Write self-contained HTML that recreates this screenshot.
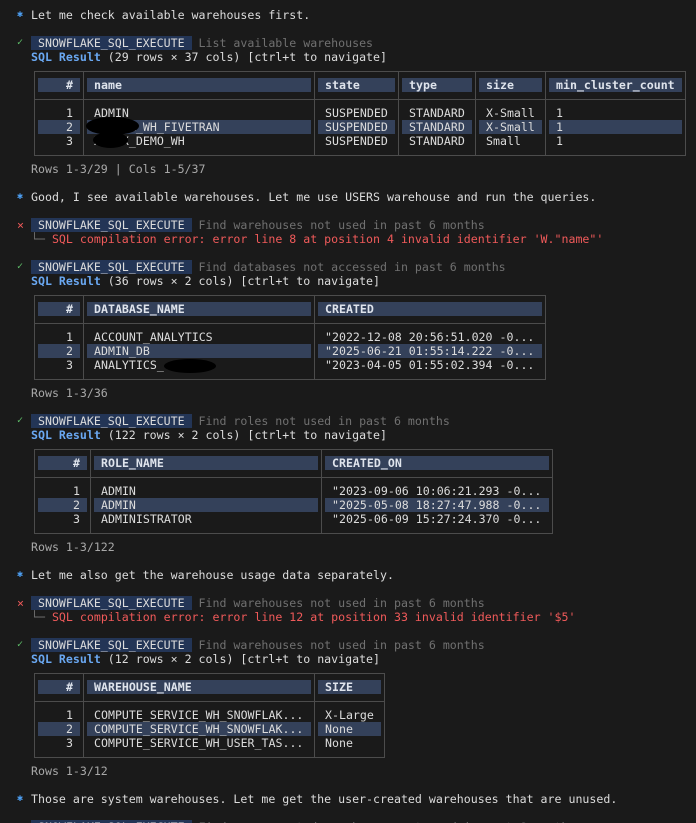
<!DOCTYPE html>
<html><head><meta charset="utf-8"><style>
html,body{margin:0;padding:0;background:#1a1a1a;width:696px;height:823px;overflow:hidden}
body{position:relative;font-family:"DejaVu Sans Mono","Liberation Mono",monospace;font-size:11.6px;color:#dcdcdc}
.t{position:absolute;height:14px;line-height:14px;white-space:pre}
.bg{position:absolute;height:14px;background:#34415a}
.bd{position:absolute;height:14px;background:#233556}
.v{position:absolute;width:1px;background:#4c4c4c}
.hz{position:absolute;height:1px;background:#4c4c4c}
.b{font-weight:bold;color:#dfe4ec}
.dim{color:#707070}
.blue{color:#4d9ff2;font-size:10px}
.grn{color:#5fc06a;font-size:10px}
.red{color:#f05a5a}
.sql{color:#6aa8f2;font-weight:bold}
.gray{color:#a8a8a8}
.blk{position:absolute;background:#000;border-radius:50%}
</style></head><body>

<div class="t blue" style="left:17px;top:8px">✱</div>
<div class="t" style="left:31px;top:8px">Let me check available warehouses first.</div>

<div class="t grn" style="left:17px;top:36px">✓</div>
<div class="bd" style="left:31px;top:36px;width:161px"></div>
<div class="t" style="left:31px;top:36px"> SNOWFLAKE_SQL_EXECUTE  <span class="dim">List available warehouses</span></div>
<div class="t" style="left:31px;top:50px"><span class="sql">SQL Result</span> (29 rows × 37 cols) [ctrl+t to navigate]</div>

<div class="hz" style="left:34px;top:71px;width:652px"></div>
<div class="hz" style="left:34px;top:99px;width:652px"></div>
<div class="hz" style="left:34px;top:155px;width:652px"></div>
<div class="v" style="left:34px;top:71px;height:85px"></div>
<div class="v" style="left:83px;top:71px;height:85px"></div>
<div class="v" style="left:314px;top:71px;height:85px"></div>
<div class="v" style="left:398px;top:71px;height:85px"></div>
<div class="v" style="left:475px;top:71px;height:85px"></div>
<div class="v" style="left:545px;top:71px;height:85px"></div>
<div class="v" style="left:685px;top:71px;height:85px"></div>

<div class="bg" style="left:38px;top:78px;width:42px"></div>
<div class="bg" style="left:87px;top:78px;width:224px"></div>
<div class="bg" style="left:318px;top:78px;width:77px"></div>
<div class="bg" style="left:402px;top:78px;width:70px"></div>
<div class="bg" style="left:479px;top:78px;width:63px"></div>
<div class="bg" style="left:549px;top:78px;width:133px"></div>
<div class="bg" style="left:38px;top:120px;width:42px"></div>
<div class="bg" style="left:87px;top:120px;width:224px"></div>
<div class="bg" style="left:318px;top:120px;width:77px"></div>
<div class="bg" style="left:402px;top:120px;width:70px"></div>
<div class="bg" style="left:479px;top:120px;width:63px"></div>
<div class="bg" style="left:549px;top:120px;width:133px"></div>

<div class="t b" style="left:66px;top:78px">#</div>
<div class="t b" style="left:94px;top:78px">name</div>
<div class="t b" style="left:325px;top:78px">state</div>
<div class="t b" style="left:409px;top:78px">type</div>
<div class="t b" style="left:486px;top:78px">size</div>
<div class="t b" style="left:556px;top:78px">min_cluster_count</div>

<div class="t" style="left:66px;top:106px">1</div>
<div class="t" style="left:94px;top:106px">ADMIN</div>
<div class="t" style="left:325px;top:106px">SUSPENDED</div>
<div class="t" style="left:409px;top:106px">STANDARD</div>
<div class="t" style="left:486px;top:106px">X-Small</div>
<div class="t" style="left:556px;top:106px">1</div>
<div class="t" style="left:66px;top:120px">2</div>
<div class="t" style="left:94px;top:120px">XXXXXX_WH_FIVETRAN</div>
<div class="t" style="left:325px;top:120px">SUSPENDED</div>
<div class="t" style="left:409px;top:120px">STANDARD</div>
<div class="t" style="left:486px;top:120px">X-Small</div>
<div class="t" style="left:556px;top:120px">1</div>
<div class="t" style="left:66px;top:134px">3</div>
<div class="t" style="left:94px;top:134px">XXXXX_DEMO_WH</div>
<div class="t" style="left:325px;top:134px">SUSPENDED</div>
<div class="t" style="left:409px;top:134px">STANDARD</div>
<div class="t" style="left:486px;top:134px">Small</div>
<div class="t" style="left:556px;top:134px">1</div>
<div class="blk" style="left:86px;top:117px;width:53px;height:18px"></div>
<div class="blk" style="left:93px;top:132px;width:35px;height:16px"></div>

<div class="t gray" style="left:31px;top:162px">Rows 1-3/29 | Cols 1-5/37</div>

<div class="t blue" style="left:17px;top:190px">✱</div>
<div class="t" style="left:31px;top:190px">Good, I see available warehouses. Let me use USERS warehouse and run the queries.</div>

<div class="t red" style="left:17px;top:218px">×</div>
<div class="bd" style="left:31px;top:218px;width:161px"></div>
<div class="t" style="left:31px;top:218px"> SNOWFLAKE_SQL_EXECUTE  <span class="dim">Find warehouses not used in past 6 months</span></div>
<div class="t" style="left:31px;top:232px"><span class="dim">└─</span> <span class="red">SQL compilation error: error line 8 at position 4 invalid identifier 'W."name"'</span></div>

<div class="t grn" style="left:17px;top:260px">✓</div>
<div class="bd" style="left:31px;top:260px;width:161px"></div>
<div class="t" style="left:31px;top:260px"> SNOWFLAKE_SQL_EXECUTE  <span class="dim">Find databases not accessed in past 6 months</span></div>
<div class="t" style="left:31px;top:274px"><span class="sql">SQL Result</span> (36 rows × 2 cols) [ctrl+t to navigate]</div>

<div class="hz" style="left:34px;top:295px;width:512px"></div>
<div class="hz" style="left:34px;top:323px;width:512px"></div>
<div class="hz" style="left:34px;top:379px;width:512px"></div>
<div class="v" style="left:34px;top:295px;height:85px"></div>
<div class="v" style="left:83px;top:295px;height:85px"></div>
<div class="v" style="left:314px;top:295px;height:85px"></div>
<div class="v" style="left:545px;top:295px;height:85px"></div>
<div class="bg" style="left:38px;top:302px;width:42px"></div>
<div class="bg" style="left:87px;top:302px;width:224px"></div>
<div class="bg" style="left:318px;top:302px;width:224px"></div>
<div class="bg" style="left:38px;top:344px;width:42px"></div>
<div class="bg" style="left:87px;top:344px;width:224px"></div>
<div class="bg" style="left:318px;top:344px;width:224px"></div>
<div class="t b" style="left:66px;top:302px">#</div>
<div class="t b" style="left:94px;top:302px">DATABASE_NAME</div>
<div class="t b" style="left:325px;top:302px">CREATED</div>
<div class="t" style="left:66px;top:330px">1</div>
<div class="t" style="left:94px;top:330px">ACCOUNT_ANALYTICS</div>
<div class="t" style="left:325px;top:330px">"2022-12-08 20:56:51.020 -0...</div>
<div class="t" style="left:66px;top:344px">2</div>
<div class="t" style="left:94px;top:344px">ADMIN_DB</div>
<div class="t" style="left:325px;top:344px">"2025-06-21 01:55:14.222 -0...</div>
<div class="t" style="left:66px;top:358px">3</div>
<div class="t" style="left:94px;top:358px">ANALYTICS_</div>
<div class="t" style="left:325px;top:358px">"2023-04-05 01:55:02.394 -0...</div>
<div class="blk" style="left:164px;top:359px;width:52px;height:14px"></div>
<div class="t gray" style="left:31px;top:386px">Rows 1-3/36</div>

<div class="t grn" style="left:17px;top:414px">✓</div>
<div class="bd" style="left:31px;top:414px;width:161px"></div>
<div class="t" style="left:31px;top:414px"> SNOWFLAKE_SQL_EXECUTE  <span class="dim">Find roles not used in past 6 months</span></div>
<div class="t" style="left:31px;top:428px"><span class="sql">SQL Result</span> (122 rows × 2 cols) [ctrl+t to navigate]</div>

<div class="hz" style="left:34px;top:449px;width:519px"></div>
<div class="hz" style="left:34px;top:477px;width:519px"></div>
<div class="hz" style="left:34px;top:533px;width:519px"></div>
<div class="v" style="left:34px;top:449px;height:85px"></div>
<div class="v" style="left:90px;top:449px;height:85px"></div>
<div class="v" style="left:321px;top:449px;height:85px"></div>
<div class="v" style="left:552px;top:449px;height:85px"></div>
<div class="bg" style="left:38px;top:456px;width:49px"></div>
<div class="bg" style="left:94px;top:456px;width:224px"></div>
<div class="bg" style="left:325px;top:456px;width:224px"></div>
<div class="bg" style="left:38px;top:498px;width:49px"></div>
<div class="bg" style="left:94px;top:498px;width:224px"></div>
<div class="bg" style="left:325px;top:498px;width:224px"></div>
<div class="t b" style="left:73px;top:456px">#</div>
<div class="t b" style="left:101px;top:456px">ROLE_NAME</div>
<div class="t b" style="left:332px;top:456px">CREATED_ON</div>
<div class="t" style="left:73px;top:484px">1</div>
<div class="t" style="left:101px;top:484px">ADMIN</div>
<div class="t" style="left:332px;top:484px">"2023-09-06 10:06:21.293 -0...</div>
<div class="t" style="left:73px;top:498px">2</div>
<div class="t" style="left:101px;top:498px">ADMIN</div>
<div class="t" style="left:332px;top:498px">"2025-05-08 18:27:47.988 -0...</div>
<div class="t" style="left:73px;top:512px">3</div>
<div class="t" style="left:101px;top:512px">ADMINISTRATOR</div>
<div class="t" style="left:332px;top:512px">"2025-06-09 15:27:24.370 -0...</div>
<div class="t gray" style="left:31px;top:540px">Rows 1-3/122</div>

<div class="t blue" style="left:17px;top:568px">✱</div>
<div class="t" style="left:31px;top:568px">Let me also get the warehouse usage data separately.</div>

<div class="t red" style="left:17px;top:596px">×</div>
<div class="bd" style="left:31px;top:596px;width:161px"></div>
<div class="t" style="left:31px;top:596px"> SNOWFLAKE_SQL_EXECUTE  <span class="dim">Find warehouses not used in past 6 months</span></div>
<div class="t" style="left:31px;top:610px"><span class="dim">└─</span> <span class="red">SQL compilation error: error line 12 at position 33 invalid identifier '$5'</span></div>

<div class="t grn" style="left:17px;top:638px">✓</div>
<div class="bd" style="left:31px;top:638px;width:161px"></div>
<div class="t" style="left:31px;top:638px"> SNOWFLAKE_SQL_EXECUTE  <span class="dim">Find warehouses not used in past 6 months</span></div>
<div class="t" style="left:31px;top:652px"><span class="sql">SQL Result</span> (12 rows × 2 cols) [ctrl+t to navigate]</div>

<div class="hz" style="left:34px;top:673px;width:351px"></div>
<div class="hz" style="left:34px;top:701px;width:351px"></div>
<div class="hz" style="left:34px;top:757px;width:351px"></div>
<div class="v" style="left:34px;top:673px;height:85px"></div>
<div class="v" style="left:83px;top:673px;height:85px"></div>
<div class="v" style="left:314px;top:673px;height:85px"></div>
<div class="v" style="left:384px;top:673px;height:85px"></div>
<div class="bg" style="left:38px;top:680px;width:42px"></div>
<div class="bg" style="left:87px;top:680px;width:224px"></div>
<div class="bg" style="left:318px;top:680px;width:63px"></div>
<div class="bg" style="left:38px;top:722px;width:42px"></div>
<div class="bg" style="left:87px;top:722px;width:224px"></div>
<div class="bg" style="left:318px;top:722px;width:63px"></div>
<div class="t b" style="left:66px;top:680px">#</div>
<div class="t b" style="left:94px;top:680px">WAREHOUSE_NAME</div>
<div class="t b" style="left:325px;top:680px">SIZE</div>
<div class="t" style="left:66px;top:708px">1</div>
<div class="t" style="left:94px;top:708px">COMPUTE_SERVICE_WH_SNOWFLAK...</div>
<div class="t" style="left:325px;top:708px">X-Large</div>
<div class="t" style="left:66px;top:722px">2</div>
<div class="t" style="left:94px;top:722px">COMPUTE_SERVICE_WH_SNOWFLAK...</div>
<div class="t" style="left:325px;top:722px">None</div>
<div class="t" style="left:66px;top:736px">3</div>
<div class="t" style="left:94px;top:736px">COMPUTE_SERVICE_WH_USER_TAS...</div>
<div class="t" style="left:325px;top:736px">None</div>
<div class="t gray" style="left:31px;top:764px">Rows 1-3/12</div>

<div class="t blue" style="left:17px;top:792px">✱</div>
<div class="t" style="left:31px;top:792px">Those are system warehouses. Let me get the user-created warehouses that are unused.</div>

<div class="bd" style="left:31px;top:820px;width:161px"></div>
<div class="t" style="left:31px;top:820px"> SNOWFLAKE_SQL_EXECUTE  <span class="dim">Find user-created warehouses not used in past 6 months</span></div>
</body></html>
